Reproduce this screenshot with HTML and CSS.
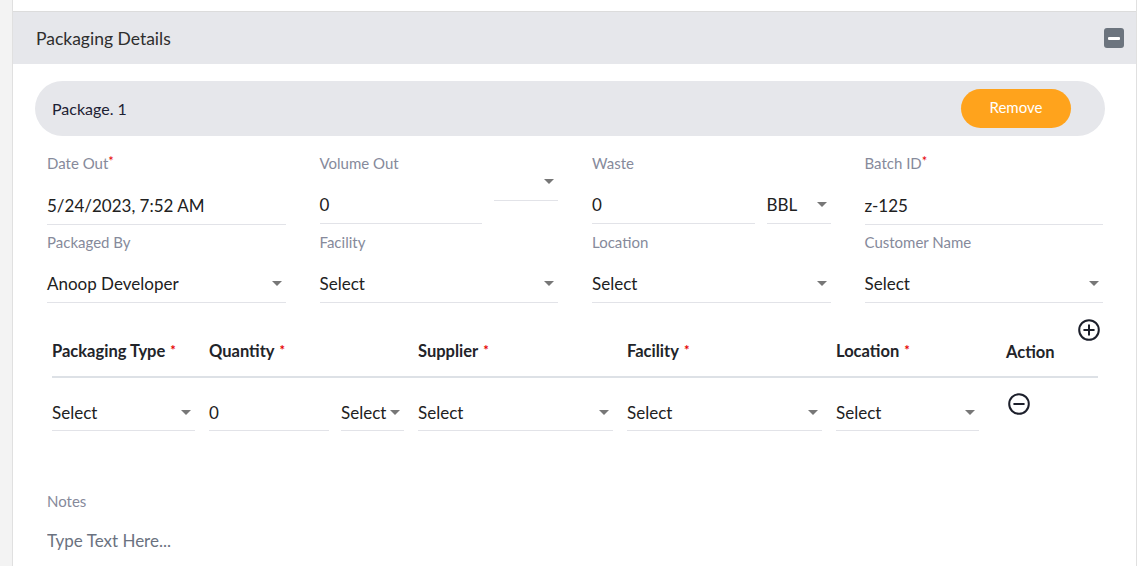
FILE: index.html
```html
<!DOCTYPE html>
<html lang="en">
<head>
<meta charset="utf-8">
<title>Packaging Details</title>
<link rel="stylesheet" href="styles.css">
</head>
<body>
<div class="page">
  <div class="side"></div>
  <div class="card">
    <div class="card-top"></div>
    <div class="card-header">
      <span class="card-title">Packaging Details</span>
      <button class="collapse-btn" type="button"><span></span></button>
    </div>
    <div class="card-body">
      <div class="pkg-bar">
        <span class="pkg-title">Package. 1</span>
        <button class="remove-btn" type="button">Remove</button>
      </div>

      <div class="fields">
        <div class="field">
          <label class="field-label">Date Out<span class="req">*</span></label>
          <div class="control">5/24/2023, 7:52 AM</div>
        </div>
        <div class="field">
          <label class="field-label">Volume Out</label>
          <div class="split">
            <div class="control grow">0</div>
            <div class="control select unit raised"><i class="caret"></i></div>
          </div>
        </div>
        <div class="field">
          <label class="field-label">Waste</label>
          <div class="split">
            <div class="control grow">0</div>
            <div class="control select unit">BBL<i class="caret"></i></div>
          </div>
        </div>
        <div class="field">
          <label class="field-label">Batch ID<span class="req">*</span></label>
          <div class="control">z-125</div>
        </div>

        <div class="field">
          <label class="field-label">Packaged By</label>
          <div class="control select">Anoop Developer<i class="caret"></i></div>
        </div>
        <div class="field">
          <label class="field-label">Facility</label>
          <div class="control select">Select<i class="caret"></i></div>
        </div>
        <div class="field">
          <label class="field-label">Location</label>
          <div class="control select">Select<i class="caret"></i></div>
        </div>
        <div class="field">
          <label class="field-label">Customer Name</label>
          <div class="control select">Select<i class="caret"></i></div>
        </div>
      </div>

      <div class="pkg-table">
        <div class="thead">
          <div class="th">Packaging Type<span class="star">*</span></div>
          <div class="th">Quantity<span class="star">*</span></div>
          <div class="th">Supplier<span class="star">*</span></div>
          <div class="th">Facility<span class="star">*</span></div>
          <div class="th">Location<span class="star">*</span></div>
          <div class="th th-action">
            <svg class="icon plus" width="22" height="22" viewBox="0 0 22 22" aria-label="Add">
              <circle cx="11" cy="11" r="9.8" fill="none" stroke="#1c1f2b" stroke-width="2"/>
              <path d="M11 6.2v9.6M6.2 11h9.6" stroke="#1c1f2b" stroke-width="2" stroke-linecap="round"/>
            </svg>
            <span>Action</span>
          </div>
        </div>
        <div class="trow">
          <div class="tcontrol select">Select<i class="caret"></i></div>
          <div class="split">
            <div class="tcontrol grow">0</div>
            <div class="tcontrol select qty-unit">Select<i class="caret"></i></div>
          </div>
          <div class="tcontrol select">Select<i class="caret"></i></div>
          <div class="tcontrol select">Select<i class="caret"></i></div>
          <div class="tcontrol select loc">Select<i class="caret"></i></div>
          <div class="tcell-action">
            <svg class="icon minus" width="22" height="22" viewBox="0 0 22 22" aria-label="Remove row">
              <circle cx="11" cy="11" r="9.8" fill="none" stroke="#1c1f2b" stroke-width="2"/>
              <path d="M6.2 11h9.6" stroke="#1c1f2b" stroke-width="2" stroke-linecap="round"/>
            </svg>
          </div>
        </div>
      </div>

      <div class="notes">
        <label class="field-label">Notes</label>
        <textarea class="notes-input" placeholder="Type Text Here..."></textarea>
      </div>
    </div>
  </div>
</div>
</body>
</html>
```

FILE: styles.css
```css
* {
  box-sizing: border-box;
}

html, body {
  margin: 0;
  padding: 0;
  background: #ffffff;
  font-family: Lato, "Open Sans", "Liberation Sans", sans-serif;
}

.page {
  display: flex;
  width: 1137px;
  height: 566px;
  overflow: hidden;
}

.side {
  flex: none;
  width: 13px;
  background: #f3f3f3;
  border-right: 1px solid #e0e0e0;
}

.card {
  flex: none;
  width: 1124px;
  border-right: 1px solid #e0e0e0;
}

.card-top {
  height: 12px;
  border-bottom: 1px solid #dcdcdc;
}

.card-header {
  height: 52px;
  background: #e6e7eb;
  display: flex;
  align-items: center;
  justify-content: space-between;
  padding: 0 12px 0 23px;
}

.card-title {
  font-size: 17.5px;
  color: #2e2e2e;
}

.collapse-btn {
  width: 20px;
  height: 20px;
  padding: 0;
  border: none;
  border-radius: 3px;
  background: #6c747e;
  display: flex;
  align-items: center;
  justify-content: center;
}

.collapse-btn span {
  width: 12px;
  height: 3px;
  background: #ffffff;
  border-radius: 1px;
}

.card-body {
  padding: 17px 33px 0 34px;
}

.pkg-bar {
  margin: 0 -2px 0 -12px;
  height: 55px;
  border-radius: 28px;
  background: #e6e7eb;
  display: flex;
  align-items: center;
  justify-content: space-between;
  padding: 0 34px 0 17px;
}

.pkg-title {
  font-size: 16px;
  color: #1d2133;
}

.remove-btn {
  width: 110px;
  height: 39px;
  padding: 0 0 3px 0;
  border: none;
  border-radius: 20px;
  background: #ffa31c;
  color: #ffffff;
  font-family: Lato, "Open Sans", sans-serif;
  font-size: 15px;
}

.fields {
  display: grid;
  grid-template-columns: repeat(4, 1fr);
  column-gap: 34px;
  row-gap: 7px;
  margin-top: 17px;
}

.field-label {
  display: block;
  font-size: 15px;
  line-height: 20px;
  color: #868a9b;
  margin-bottom: 13px;
}

.req {
  color: #e60000;
  font-size: 13px;
  position: relative;
  top: -3px;
}

.control {
  height: 38px;
  border-bottom: 1px solid #e2e3e8;
  display: flex;
  align-items: center;
  font-size: 17px;
  color: #212121;
}

.split {
  display: flex;
  align-items: flex-start;
  gap: 12px;
}

.grow {
  flex: 1;
  min-width: 0;
}

.unit {
  flex: none;
  width: 64px;
}

.raised {
  margin-top: -23px;
}

.caret {
  flex: none;
  margin-left: auto;
  margin-right: 4px;
  width: 0;
  height: 0;
  border-left: 5px solid transparent;
  border-right: 5px solid transparent;
  border-top: 5px solid #777777;
}

.pkg-table {
  margin: 16px 5px 0 5px;
}

.thead,
.trow {
  display: grid;
  grid-template-columns: 143px 195px 195px 195px 156px 1fr;
  column-gap: 14px;
}

.thead {
  align-items: end;
  padding-bottom: 12px;
  border-bottom: 2px solid #dde1e6;
}

.th {
  font-size: 16.5px;
  font-weight: 700;
  line-height: 24px;
  color: #222429;
}

.star {
  color: #e60000;
  font-size: 13px;
  margin-left: 5px;
  position: relative;
  top: -2px;
}

.th-action {
  display: flex;
  flex-direction: column;
}

.th-action .plus {
  align-self: flex-end;
  margin-right: -2px;
  margin-bottom: -1px;
}

.trow {
  padding-top: 16px;
}

.tcontrol {
  height: 37px;
  border-bottom: 1px solid #e2e3e8;
  display: flex;
  align-items: center;
  font-size: 17px;
  color: #212121;
}

.qty-unit {
  flex: none;
  width: 63px;
}

.qty-unit .caret {
  margin-left: 4px;
  margin-right: 5px;
}

.loc {
  width: 143px;
}

.tcell-action {
  padding-left: 2px;
}

.tcell-action .minus {
  display: block;
  margin-top: -1px;
}

.notes {
  margin-top: 60px;
}

.notes .field-label {
  margin-bottom: 18px;
}

.notes-input {
  display: block;
  width: 100%;
  height: 60px;
  padding: 0;
  border: none;
  outline: none;
  resize: none;
  font-family: Lato, "Open Sans", sans-serif;
  font-size: 17px;
  line-height: 24px;
  color: #212121;
  background: transparent;
}

.notes-input::placeholder {
  color: #6b7280;
  opacity: 1;
}
```
